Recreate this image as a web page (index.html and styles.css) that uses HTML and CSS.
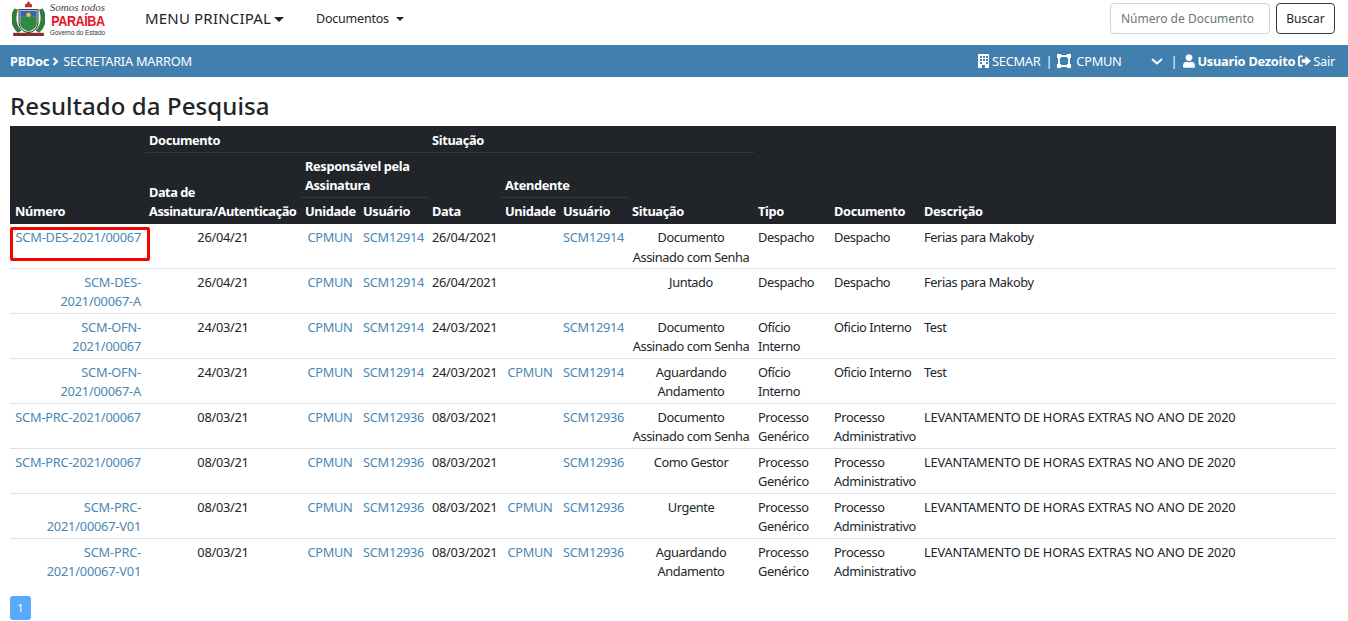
FILE: index.html
```html
<!DOCTYPE html>
<html lang="pt-BR">
<head>
<meta charset="utf-8">
<title>Resultado da Pesquisa</title>
<link rel="stylesheet" href="styles.css">
</head>
<body>
<header class="topnav">
  <div class="logo">
    <svg class="arms" width="33" height="35" viewBox="3 1 28 33" preserveAspectRatio="none">
      <path d="M17 1l2 3h-4z M14 4h6v3h-6z" fill="#b33"/>
      <path d="M5 8c-4 7-4 16 3 23l3-2c-5-6-5-13-3-20z M29 8c4 7 4 16-3 23l-3-2c5-6 5-13 3-20z" fill="#2f7d3c"/>
      <path d="M9 9h16v12c0 6-4 9-8 10-4-1-8-4-8-10z" fill="#fff" stroke="#444"/>
      <path d="M10 10h14v6h-14z" fill="#3668b0"/>
      <path d="M10 16h14v6c0 4-3 6-7 8-4-2-7-4-7-8z" fill="#2f8a3f"/>
      <circle cx="17" cy="14" r="2" fill="#e8c93c"/>
      <path d="M4 31h26v3h-26z" fill="#8a2a2a"/>
    </svg>
    <div class="wordmark">
      <span class="slogan">Somos todos</span>
      <span class="state">PARAÍBA</span>
      <span class="gov">Governo do Estado</span>
    </div>
  </div>
  <nav class="menus">
    <a class="menu-main">MENU PRINCIPAL<i class="caret caret-lg"></i></a>
    <a class="menu-doc">Documentos<i class="caret"></i></a>
  </nav>
  <form class="search">
    <input class="search-input" type="text" placeholder="Número de Documento">
    <button class="search-btn" type="button">Buscar</button>
  </form>
</header>

<div class="bluebar">
  <div class="crumb"><b>PBDoc</b>
    <svg class="crumb-arrow" width="7" height="9" viewBox="0 0 7 9"><path d="M1.500 1l3.500 3.500-3.500 3.500" fill="none" stroke="#fff" stroke-width="2"/></svg>
    <span>SECRETARIA MARROM</span></div>
  <div class="userbox">
    <svg width="11" height="14" viewBox="0 0 11 14"><path fill="#fff" fill-rule="evenodd" d="M0 0h11v14h-4v-3h-3v3h-4z M2 2v2h2v-2z M5 2v2h2v-2z M8 2v2h2v-2z M2 5v2h2v-2z M5 5v2h2v-2z M8 5v2h2v-2z M2 8v2h2v-2z M8 8v2h2v-2z"/></svg>
    <span class="lot">SECMAR</span>
    <span class="sep">|</span>
    <svg width="14" height="14" viewBox="0 0 14 14"><path fill="#fff" fill-rule="evenodd" d="M0 0h4v1h6v-1h4v4h-1v6h1v4h-4v-1h-6v1h-4v-4h1v-6h-1z M3 4v6h1v1h6v-1h1v-6h-1v-1h-6v1z"/></svg>
    <span class="unit">CPMUN</span>
    <svg class="chev" width="12" height="7" viewBox="0 0 12 7"><path d="M1 1l5 4.500 5-4.500" fill="none" stroke="#fff" stroke-width="2"/></svg>
    <span class="sep sep-b">|</span>
    <svg width="12" height="14" viewBox="0 0 448 512"><path fill="#fff" d="M224 256c70.700 0 128-57.300 128-128S294.700 0 224 0 96 57.300 96 128s57.300 128 128 128zm89.600 32h-16.700c-22.200 10.200-46.900 16-72.900 16s-50.600-5.800-72.900-16h-16.700C60.200 288 0 348.200 0 422.400V464c0 26.500 21.500 48 48 48h352c26.500 0 48-21.500 48-48v-41.600c0-74.200-60.200-134.400-134.400-134.400z"/></svg>
    <b class="uname">Usuario Dezoito</b>
    <svg width="13" height="12" viewBox="0 0 14 12"><path fill="#fff" d="M5 0v2h-3v8h3v2h-3a2 2 0 0 1-2-2v-8a2 2 0 0 1 2-2z M8 1l6 5-6 5v-3h-4v-4h4z"/></svg>
    <span class="exit">Sair</span>
  </div>
</div>

<main class="content">
  <h1 class="title">Resultado da Pesquisa</h1>
  <table class="results">
    <colgroup>
      <col class="c-num"><col class="c-date"><col class="c-un"><col class="c-us"><col class="c-dt"><col class="c-un2"><col class="c-us"><col class="c-sit"><col class="c-tipo"><col class="c-doc"><col>
    </colgroup>
    <thead>
      <tr class="h1">
        <th rowspan="3" class="first">Número</th>
        <th colspan="3" class="line">Documento</th>
        <th colspan="4" class="line">Situação</th>
        <th rowspan="3">Tipo</th>
        <th rowspan="3">Documento</th>
        <th rowspan="3">Descrição</th>
      </tr>
      <tr class="h2">
        <th rowspan="2" class="tight">Data de Assinatura/Autenticação</th>
        <th colspan="2" class="line">Responsável pela Assinatura</th>
        <th rowspan="2">Data</th>
        <th colspan="2" class="line">Atendente</th>
        <th rowspan="2">Situação</th>
      </tr>
      <tr class="h3">
        <th>Unidade</th><th>Usuário</th><th>Unidade</th><th>Usuário</th>
      </tr>
    </thead>
    <tbody>
      <tr><td class="num"><a>SCM-DES-2021/00067</a></td><td class="ctr">26/04/21</td><td class="ctr"><a>CPMUN</a></td><td class="ctr"><a>SCM12914</a></td><td>26/04/2021</td><td class="ctr"></td><td class="ctr"><a>SCM12914</a></td><td class="sit">Documento<br>Assinado com Senha</td><td class="word">Despacho</td><td class="word">Despacho</td><td class="word">Ferias para Makoby</td></tr>
      <tr><td class="num"><a>SCM-DES-<br>2021/00067-A</a></td><td class="ctr">26/04/21</td><td class="ctr"><a>CPMUN</a></td><td class="ctr"><a>SCM12914</a></td><td>26/04/2021</td><td class="ctr"></td><td class="ctr"></td><td class="sit">Juntado</td><td class="word">Despacho</td><td class="word">Despacho</td><td class="word">Ferias para Makoby</td></tr>
      <tr><td class="num"><a>SCM-OFN-<br>2021/00067</a></td><td class="ctr">24/03/21</td><td class="ctr"><a>CPMUN</a></td><td class="ctr"><a>SCM12914</a></td><td>24/03/2021</td><td class="ctr"></td><td class="ctr"><a>SCM12914</a></td><td class="sit">Documento<br>Assinado com Senha</td><td class="word">Ofício Interno</td><td class="word">Oficio Interno</td><td class="word">Test</td></tr>
      <tr><td class="num"><a>SCM-OFN-<br>2021/00067-A</a></td><td class="ctr">24/03/21</td><td class="ctr"><a>CPMUN</a></td><td class="ctr"><a>SCM12914</a></td><td>24/03/2021</td><td class="ctr"><a>CPMUN</a></td><td class="ctr"><a>SCM12914</a></td><td class="sit">Aguardando<br>Andamento</td><td class="word">Ofício Interno</td><td class="word">Oficio Interno</td><td class="word">Test</td></tr>
      <tr><td class="num"><a>SCM-PRC-2021/00067</a></td><td class="ctr">08/03/21</td><td class="ctr"><a>CPMUN</a></td><td class="ctr"><a>SCM12936</a></td><td>08/03/2021</td><td class="ctr"></td><td class="ctr"><a>SCM12936</a></td><td class="sit">Documento<br>Assinado com Senha</td><td class="word">Processo Genérico</td><td class="word">Processo Administrativo</td><td class="up">LEVANTAMENTO DE HORAS EXTRAS NO ANO DE 2020</td></tr>
      <tr><td class="num"><a>SCM-PRC-2021/00067</a></td><td class="ctr">08/03/21</td><td class="ctr"><a>CPMUN</a></td><td class="ctr"><a>SCM12936</a></td><td>08/03/2021</td><td class="ctr"></td><td class="ctr"><a>SCM12936</a></td><td class="sit">Como Gestor</td><td class="word">Processo Genérico</td><td class="word">Processo Administrativo</td><td class="up">LEVANTAMENTO DE HORAS EXTRAS NO ANO DE 2020</td></tr>
      <tr><td class="num"><a>SCM-PRC-<br>2021/00067-V01</a></td><td class="ctr">08/03/21</td><td class="ctr"><a>CPMUN</a></td><td class="ctr"><a>SCM12936</a></td><td>08/03/2021</td><td class="ctr"><a>CPMUN</a></td><td class="ctr"><a>SCM12936</a></td><td class="sit">Urgente</td><td class="word">Processo Genérico</td><td class="word">Processo Administrativo</td><td class="up">LEVANTAMENTO DE HORAS EXTRAS NO ANO DE 2020</td></tr>
      <tr><td class="num"><a>SCM-PRC-<br>2021/00067-V01</a></td><td class="ctr">08/03/21</td><td class="ctr"><a>CPMUN</a></td><td class="ctr"><a>SCM12936</a></td><td>08/03/2021</td><td class="ctr"><a>CPMUN</a></td><td class="ctr"><a>SCM12936</a></td><td class="sit">Aguardando<br>Andamento</td><td class="word">Processo Genérico</td><td class="word">Processo Administrativo</td><td class="up">LEVANTAMENTO DE HORAS EXTRAS NO ANO DE 2020</td></tr>
    </tbody>
  </table>
  <div class="pager"><a class="page-btn">1</a></div>
</main>
<div class="highlight"></div>
</body>
</html>
```
FILE: styles.css
```css
* { box-sizing: border-box; }
html, body { margin: 0; height: 100%; overflow: hidden; }
body {
  font-family: "Noto Sans", "Open Sans", sans-serif;
  font-size: 12.8px;
  line-height: 19.2px;
  color: #212529;
  background: #fff;
  position: relative;
}
a { color: #4a87b5; text-decoration: none; }

.topnav { height: 45px; display: flex; align-items: flex-start; padding: 0 12px; }
.logo { display: flex; align-items: flex-start; width: 133px; height: 45px; flex: none; }
.arms { margin-top: 1px; flex: none; }
.wordmark { display: flex; flex-direction: column; align-items: flex-end; margin-left: 7px; width: 53px; padding-top: 1px; color: #333; }
.slogan { font: italic 11px/12px "Liberation Serif", serif; white-space: nowrap; color: #444; }
.state { font: bold 15px/15px "Liberation Sans", sans-serif; color: #e2172b; letter-spacing: -.5px; white-space: nowrap; transform: scaleX(.84); transform-origin: right center; }
.gov { font: 6.400px/9px "Liberation Sans", sans-serif; white-space: nowrap; color: #333; }

.menus { display: flex; align-items: center; flex: 1; height: 38px; }
.menu-main { font-size: 15px; color: #212529; margin-right: 26px; letter-spacing: .18px; }
.menu-doc { font-size: 12.500px; color: #212529; letter-spacing: -.2px; margin-left: 6px; }
.caret { display: inline-block; border-top: 5px solid #212529; border-left: 5px solid transparent; border-right: 5px solid transparent; margin-left: 3px; vertical-align: 2px; }
.menu-doc .caret { border-width: 4px 4px 0; margin-left: 7px; }

.search { display: flex; gap: 6px; margin: 3px 1px 0 0; }
.search-input { width: 160px; height: 31px; border: 1px solid #ced4da; border-radius: 4px; padding: 0 10px; font: 12px "Noto Sans", sans-serif; color: #495057; }
.search-input::placeholder { color: #6c757d; opacity: 1; }
.search-btn { width: 59px; height: 31px; border: 1px solid #343a40; border-radius: 4px; background: #fff; color: #212529; font: 12px "Noto Sans", sans-serif; padding: 0; }

.bluebar { height: 32px; background: #417fae; color: #fff; display: flex; align-items: center; justify-content: space-between; padding: 1px 13px 0 10px; letter-spacing: -.25px; }
.crumb { display: flex; align-items: center; }
.crumb-arrow { margin: 0 4px 0 3px; }
.userbox { display: flex; align-items: center; }
.lot { margin-left: 3px; }
.sep { margin: 0 5px; }
.unit { margin-left: 5px; }
.chev { margin-left: 29px; }
.sep-b { margin: 0 6px 0 8px; }
.uname { margin: 0 3px 0 2px; }
.exit { margin-left: 2px; }

.content { padding: 0 12px 0 10px; }
.title { font-size: 24px; line-height: 29px; font-weight: 500; margin: 14px 0 6px; letter-spacing: .1px; }

.results { width: 1326px; border-collapse: collapse; table-layout: fixed; }
.c-num { width: 135px; }
.c-date { width: 156px; }
.c-un { width: 58px; }
.c-us { width: 69px; }
.c-dt { width: 73px; }
.c-un2 { width: 58px; }
.c-sit { width: 126px; }
.c-tipo { width: 76px; }
.c-doc { width: 90px; }

.results thead { background: #212529; color: #fff; }
.results th { text-align: left; vertical-align: bottom; padding: 0 4px 3px; font-weight: 700; letter-spacing: -.35px; }
.results th.first { padding-left: 5px; }
.results th.tight { letter-spacing: -.48px; }
.results th.line { border-bottom: 1px solid #32383e; padding-bottom: 1px; }
.h1 { height: 26px; }
.h2 { height: 45px; }
.h3 { height: 27px; }

.results td { padding: 4.400px 4px 0; height: 45px; vertical-align: top; border-bottom: 1px solid #dee2e6; letter-spacing: -.27px; }
.results tbody tr:first-child td { height: 44px; }
.results tbody tr:last-child td { border-bottom: 0; }
.results td.num { text-align: right; letter-spacing: -.2px; }
.results td.ctr { text-align: center; }
.results td.sit { text-align: center; white-space: nowrap; padding-left: 0; padding-right: 0; letter-spacing: -.42px; }
.results td.word { letter-spacing: -.42px; }
.results td.up { letter-spacing: -.18px; }

.pager { margin-top: 13px; }
.page-btn { display: block; width: 21px; height: 24px; background: #5aa9fb; color: #fff; border-radius: 3px; text-align: center; line-height: 24px; font-size: 11px; }

.highlight { position: absolute; left: 10px; top: 227px; width: 140px; height: 34px; border: 3px solid #f00; border-radius: 2px; }
```
